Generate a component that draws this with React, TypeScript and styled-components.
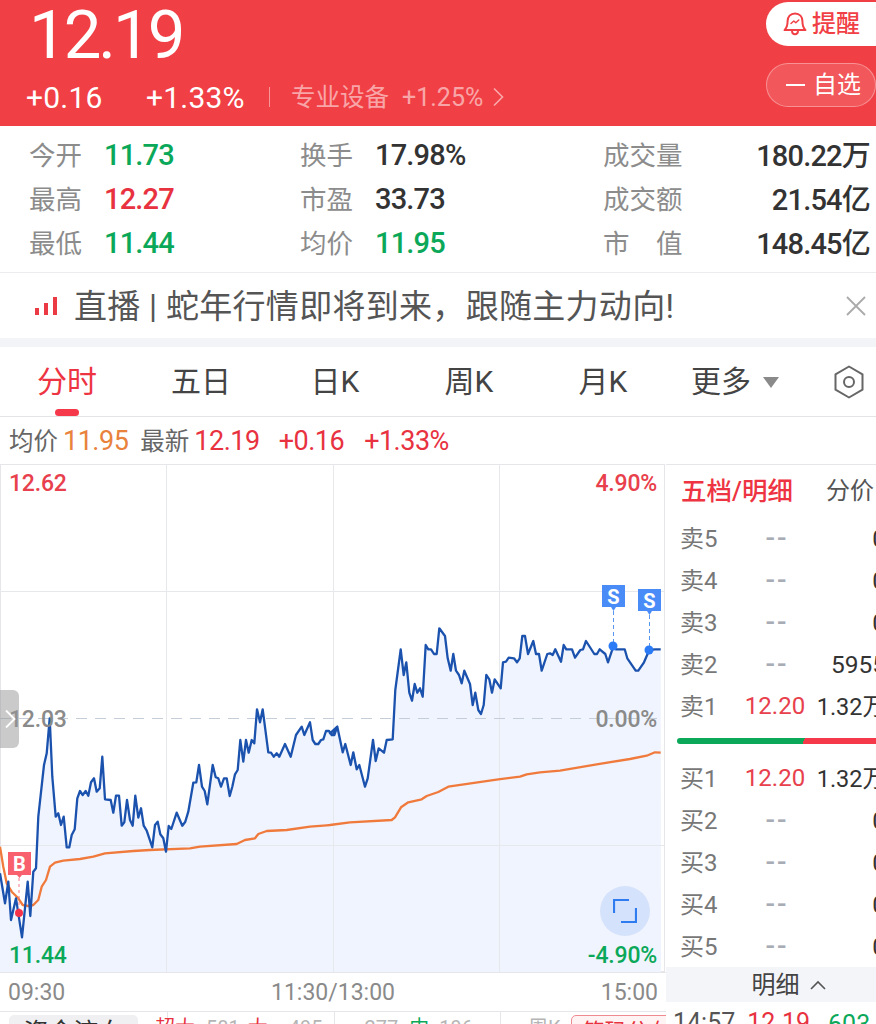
import styled, { createGlobalStyle } from 'styled-components';

const RED = '#f14045';
const GREEN = '#0ba85a';
const FONT = `Roboto, "Noto Sans CJK SC", sans-serif`;

// traced from the reference, [x, y] in page pixels
const leftPrice = [
    [0, 850], [15, 940], [25, 875], [33, 990], [48, 925], [66, 1042], [83, 875], [91, 978], [100, 845], [108, 835], [115, 680],
    [132, 525], [140, 490], [149, 385], [157, 560], [167, 680], [175, 670], [183, 705], [191, 680], [200, 772], [208, 772],
    [215, 735], [224, 718], [232, 625], [240, 603], [248, 615], [257, 603], [265, 617], [273, 577], [282, 565], [290, 605],
    [299, 595], [307, 500], [315, 628], [332, 630], [340, 668], [348, 617], [357, 617], [365, 707], [373, 697], [381, 630],
    [390, 690], [398, 707], [406, 617], [415, 683], [423, 655], [431, 707], [440, 722], [457, 772], [465, 705], [473, 695],
    [481, 733], [490, 745], [498, 785], [506, 708], [514, 717], [530, 668], [547, 707], [556, 695], [565, 665], [580, 578],
    [589, 577], [597, 525], [606, 590], [614, 603], [622, 643], [638, 525], [647, 562], [655, 565], [663, 590], [672, 565],
    [680, 565], [689, 618], [697, 590], [705, 553], [713, 540], [721, 450], [730, 515], [738, 450], [746, 488], [755, 450],
    [763, 460], [771, 358], [780, 397], [788, 358], [805, 487], [813, 488], [821, 500], [830, 490], [838, 500], [855, 462],
    [872, 500], [888, 435], [905, 410], [913, 435], [930, 397], [938, 450], [946, 462], [955, 462], [963, 450], [970, 448],
    [978, 423], [987, 423], [995, 435], [1003, 435], [1012, 410],
].map(([x, y]) => [x / 3, 590 + y / 3]);

const rightPrice = [
    [0, 460], [8, 465], [22, 440], [38, 517], [46, 492], [62, 555], [70, 517], [80, 568], [88, 555], [105, 620], [113, 595],
    [129, 480], [137, 543], [146, 505], [162, 518], [170, 480], [188, 478], [196, 330], [212, 208], [221, 285], [229, 247],
    [238, 338], [246, 362], [254, 312], [262, 338], [270, 325], [278, 350], [287, 195], [295, 208], [303, 208], [312, 222],
    [320, 222], [328, 145], [345, 168], [353, 235], [362, 272], [370, 222], [378, 272], [387, 285], [395, 310], [403, 272],
    [420, 312], [428, 375], [436, 338], [445, 390], [453, 402], [461, 375], [469, 285], [478, 298], [486, 338], [494, 298],
    [512, 325], [519, 247], [528, 245], [536, 233], [552, 235], [561, 247], [569, 235], [577, 168], [585, 168], [594, 222],
    [610, 183], [618, 222], [627, 222], [635, 272], [652, 222], [660, 220], [668, 225], [676, 208], [693, 245], [701, 195],
    [709, 208], [726, 208], [735, 233], [751, 210], [759, 208], [768, 183], [793, 222], [801, 222], [809, 208], [826, 222],
    [834, 247], [850, 200], [858, 208], [884, 208], [892, 235], [917, 272], [925, 272], [942, 247], [958, 210], [975, 208],
    [992, 208],
].map(([x, y]) => [330 + x / 3, 580 + y / 3]);

const leftAvg = [
    [0, 770], [10, 830], [20, 880], [35, 905], [55, 925], [68, 945], [85, 948], [100, 945], [115, 930], [125, 890], [138, 870],
    [150, 830], [165, 818], [190, 812], [240, 807], [280, 800], [315, 790], [400, 783], [450, 780], [570, 775], [600, 770],
    [710, 762], [735, 750], [765, 745], [775, 732], [800, 723], [860, 720], [930, 710], [980, 706],
].map(([x, y]) => [x / 3, 590 + y / 3]);

const rightAvg = [
    [0, 735], [60, 727], [185, 720], [195, 712], [213, 682], [235, 667], [275, 658], [290, 648], [325, 636], [355, 620],
    [505, 598], [570, 590], [590, 583], [630, 577], [690, 572], [800, 553], [900, 537], [950, 527], [975, 517], [992, 518],
].map(([x, y]) => [330 + x / 3, 580 + y / 3]);

const price = [...leftPrice, ...rightPrice];
const avg = [...leftAvg, ...rightAvg];
const toPoints = (line: number[][]) => line.map(([x, y]) => `${x.toFixed(1)},${y.toFixed(1)}`).join(' ');
const areaPoints = `${toPoints(price)} 661,972 0,972`;

const stats = [
    [['今开', '11.73', GREEN], ['换手', '17.98%', '#333'], ['成交量', '180.22万', '#333']],
    [['最高', '12.27', '#e8323f'], ['市盈', '33.73', '#333'], ['成交额', '21.54亿', '#333']],
    [['最低', '11.44', GREEN], ['均价', '11.95', GREEN], ['市　值', '148.45亿', '#333']],
];

const sells = [['卖5', '--', '0'], ['卖4', '--', '0'], ['卖3', '--', '0'], ['卖2', '--', '5955'], ['卖1', '12.20', '1.32万']];
const buys = [['买1', '12.20', '1.32万'], ['买2', '--', '0'], ['买3', '--', '0'], ['买4', '--', '0'], ['买5', '--', '0']];
const tabs = ['分时', '五日', '日K', '周K', '月K'];

const flow = [
    { text: '超大', color: '#e8323f', gap: 17 },
    { text: '581', color: '#b5b5b5', gap: 11 },
    { text: '大', color: '#e8323f', gap: 8 },
    { text: '495', color: '#b5b5b5', gap: 21 },
    { text: '277', color: '#b5b5b5', gap: 42 },
    { text: '中', color: GREEN, gap: 11 },
    { text: '196', color: '#b5b5b5', gap: 10 },
    { text: '周K', color: '#b5b5b5', gap: 55 },
];

const Quote = ({ row }: { row: string[] }) => (
    <QuoteRow>
        <QuoteLabel>{row[0]}</QuoteLabel>
        <QuotePrice $empty={row[1] === '--'}>{row[1]}</QuotePrice>
        <QuoteVolume $compact={row[2].includes('万')}>{row[2]}</QuoteVolume>
    </QuoteRow>
);

export default function App() {
    return (
        <Page>
            <Global />
            <Header>
                <HeaderLeft>
                    <BigPrice>12.19</BigPrice>
                    <ChangeRow>
                        <Change $width={120}>+0.16</Change>
                        <Change $width={123}>+1.33%</Change>
                        <Divider />
                        <SectorName>专业设备</SectorName>
                        <SectorChange>+1.25%</SectorChange>
                        <svg width="12" height="20" viewBox="0 0 12 20" fill="none" stroke="rgba(255,255,255,.55)" strokeWidth="1.6">
                            <path d="M2 1.5 10.5 10 2 18.5" />
                        </svg>
                    </ChangeRow>
                </HeaderLeft>
                <HeaderRight>
                    <RemindButton>
                        <svg width="26" height="26" viewBox="0 0 26 26" fill="none" stroke={RED} strokeWidth="2" strokeLinejoin="round" strokeLinecap="round">
                            <path d="M13 2.5c-4.6 0-7.4 3.3-7.4 7.6 0 4.300-.9 6.900-3.100 9h21c-2.200-2.100-3.100-4.700-3.100-9 0-4.300-2.800-7.600-7.400-7.600Z" />
                            <path d="M10 19.500c0 2.300 1.300 3.800 3 3.800s3-1.500 3-3.800" />
                            <path d="m9 12.500 2.800-2.500 2 1.800 3-2.800" strokeWidth="1.500" />
                        </svg>
                        <ButtonText>提醒</ButtonText>
                    </RemindButton>
                    <WatchButton>
                        <WatchDash />
                        <ButtonText>自选</ButtonText>
                    </WatchButton>
                </HeaderRight>
            </Header>

            <Stats>
                {stats.map((row, i) => (
                    <StatRow key={i}>
                        {row.map(([label, value, color], j) => (
                            <StatItem key={label} $last={j === 2}>
                                <StatLabel>{label}</StatLabel>
                                <StatValue $color={color} $last={j === 2}>{value}</StatValue>
                            </StatItem>
                        ))}
                    </StatRow>
                ))}
            </Stats>

            <Banner>
                <LiveBars>
                    <i />
                    <i />
                    <i />
                </LiveBars>
                <BannerText>直播 | 蛇年行情即将到来，跟随主力动向!</BannerText>
                <svg width="22" height="22" viewBox="0 0 22 22" stroke="#aaa" strokeWidth="1.800">
                    <path d="M2 2 20 20M20 2 2 20" />
                </svg>
            </Banner>

            <Tabs>
                {tabs.map((tab, i) => (
                    <Tab key={tab} $active={i === 0}>{tab}</Tab>
                ))}
                <MoreTab>
                    更多
                    <MoreArrow />
                </MoreTab>
                <SettingIcon>
                    <svg width="30" height="34" viewBox="0 0 30 34" fill="none" stroke="#666" strokeWidth="2">
                        <path d="M15 1.500 28.500 9.300V24.700L15 32.500 1.500 24.700V9.300Z" strokeLinejoin="round" />
                        <circle cx="15" cy="17" r="5" />
                    </svg>
                </SettingIcon>
            </Tabs>

            <InfoRow>
                <InfoLabel>均价</InfoLabel>
                <InfoValue $color="#e8823c">11.95</InfoValue>
                <InfoLabel $gap={12}>最新</InfoLabel>
                <InfoValue $color="#e8323f">12.19</InfoValue>
                <InfoValue $color="#e8323f" $gap={19}>+0.16</InfoValue>
                <InfoValue $color="#e8323f" $gap={20}>+1.33%</InfoValue>
            </InfoRow>

            <Body>
                <ChartColumn>
                    <Chart>
                        <svg width="665" height="508" viewBox="0 464 665 508">
                            <rect x="0.500" y="464.500" width="664" height="507" fill="#fff" stroke="#e6e6ea" />
                            <polygon points={areaPoints} fill="#f0f4fe" />
                            <g stroke="#e7e8ec" strokeWidth="1">
                                <path d="M166.500 464V972M333.500 464V972M499.500 464V972" />
                                <path d="M0 591.500H665M0 845.500H665" />
                            </g>
                            <path d="M0 718.500H665" stroke="#c5ced8" strokeWidth="1" strokeDasharray="11 8" />
                            <polyline points={toPoints(avg)} fill="none" stroke="#f07a3c" strokeWidth="2.300" strokeLinejoin="round" />
                            <polyline points={toPoints(price)} fill="none" stroke="#1b52ae" strokeWidth="2.300" strokeLinejoin="round" />

                            <path d="M19 878V910" stroke="#f5788a" strokeWidth="1" strokeDasharray="3 3" />
                            <circle cx="19" cy="913" r="4" fill="#f5334a" />
                            <path d="M8 852H31V875H22L19.500 878 17 875H8Z" fill="#f9606e" />
                            <MarkerText x="19.500" y="871">B</MarkerText>

                            <path d="M613.500 611V644" stroke="#5a96f0" strokeWidth="1" strokeDasharray="4 3" />
                            <circle cx="613" cy="646" r="4.500" fill="#2a7bf5" />
                            <path d="M602 585H625V607H616L613.500 611 611 607H602Z" fill="#4a8cf7" />
                            <MarkerText x="613.500" y="604">S</MarkerText>

                            <path d="M649.500 615V648" stroke="#5a96f0" strokeWidth="1" strokeDasharray="4 3" />
                            <circle cx="649" cy="650" r="4.500" fill="#2a7bf5" />
                            <path d="M638 589H661V611H652L649.500 615 647 611H638Z" fill="#4a8cf7" />
                            <MarkerText x="649.500" y="608">S</MarkerText>
                        </svg>
                        <AxisLabel $top={6} $left={9} $color="#e8404c">12.62</AxisLabel>
                        <AxisLabel $top={6} $right={9} $color="#e8404c">4.90%</AxisLabel>
                        <AxisLabel $top={242} $left={9} $color="#8a8a8a">12.03</AxisLabel>
                        <AxisLabel $top={242} $right={9} $color="#8a8a8a">0.00%</AxisLabel>
                        <AxisLabel $top={478} $left={9} $color={GREEN}>11.44</AxisLabel>
                        <AxisLabel $top={478} $right={9} $color={GREEN}>-4.90%</AxisLabel>
                        <SideHandle>
                            <svg width="12" height="20" viewBox="0 0 12 20" fill="none" stroke="#fff" strokeWidth="1.800">
                                <path d="M2 1.500 10.500 10 2 18.500" />
                            </svg>
                        </SideHandle>
                        <ExpandButton>
                            <svg width="24" height="24" viewBox="0 0 24 24" fill="none" stroke="#2f7bf0" strokeWidth="2.200">
                                <path d="M1 14V1H16M23 9V23H8" />
                            </svg>
                        </ExpandButton>
                    </Chart>
                    <TimeAxis>
                        <span>09:30</span>
                        <span>11:30/13:00</span>
                        <span>15:00</span>
                    </TimeAxis>
                    <FlowRow>
                        <FlowTab>资金流向</FlowTab>
                        {flow.map((item) => (
                            <FlowText key={item.text} $color={item.color} $gap={item.gap}>{item.text}</FlowText>
                        ))}
                        <ChipTag>筹码分布</ChipTag>
                    </FlowRow>
                </ChartColumn>

                <Panel>
                    <PanelHeader>
                        <PanelTitle>五档/明细</PanelTitle>
                        <PanelSub>分价</PanelSub>
                    </PanelHeader>
                    {sells.map((row) => <Quote key={row[0]} row={row} />)}
                    <RatioWrap>
                        <RatioBar />
                    </RatioWrap>
                    {buys.map((row) => <Quote key={row[0]} row={row} />)}
                    <DetailBar>
                        <DetailText>明细</DetailText>
                        <svg width="16" height="10" viewBox="0 0 16 10" fill="none" stroke="#555" strokeWidth="1.600">
                            <path d="M1 9 8 2l7 7" />
                        </svg>
                    </DetailBar>
                    <TradeRow>
                        <span>14:57</span>
                        <TradePrice>12.19</TradePrice>
                        <TradeVolume>603↑</TradeVolume>
                    </TradeRow>
                </Panel>
            </Body>
        </Page>
    );
}

const Global = createGlobalStyle`
    html, body {
        margin: 0;
        padding: 0;
        background: #fff;
    }
`;

const Page = styled.div`
    width: 876px;
    height: 1024px;
    overflow: hidden;
    background: #fff;
    font-family: ${FONT};
`;

const Header = styled.div`
    height: 126px;
    background: ${RED};
    display: flex;
    justify-content: space-between;
    color: #fff;
`;

const HeaderLeft = styled.div`
    padding-left: 26px;
`;

const BigPrice = styled.div`
    height: 70px;
    padding-left: 3px;
    font-size: 67px;
    line-height: 70px;
    letter-spacing: -3px;
`;

const ChangeRow = styled.div`
    height: 54px;
    display: flex;
    align-items: center;
`;

const Change = styled.span<{ $width: number }>`
    width: ${(p) => p.$width}px;
    font-size: 30px;
    letter-spacing: 0.2px;
`;

const Divider = styled.i`
    width: 1px;
    height: 20px;
    margin-right: 21px;
    background: rgba(255, 255, 255, 0.45);
`;

const SectorName = styled.span`
    width: 111px;
    margin-top: -4px;
    font-size: 24.5px;
    color: rgba(255, 255, 255, 0.55);
`;

const SectorChange = styled.span`
    width: 90px;
    font-size: 25px;
    color: rgba(255, 255, 255, 0.55);
`;

const HeaderRight = styled.div`
    width: 110px;
    padding-top: 2px;
    display: flex;
    flex-direction: column;
    gap: 17px;
`;

const ButtonText = styled.span`
    margin-top: -5px;
`;

const RemindButton = styled.div`
    height: 44px;
    border-radius: 22px 0 0 22px;
    background: #fff;
    color: ${RED};
    font-size: 24px;
    font-weight: 500;
    display: flex;
    align-items: center;
    gap: 4px;
    padding-left: 16px;
    box-sizing: border-box;
`;

const WatchButton = styled.div`
    height: 44px;
    border: 1px solid rgba(255, 255, 255, 0.35);
    border-radius: 22px;
    background: rgba(255, 255, 255, 0.12);
    font-size: 24px;
    display: flex;
    align-items: center;
    gap: 8px;
    padding-left: 19px;
    box-sizing: border-box;
`;

const WatchDash = styled.i`
    width: 19px;
    height: 2px;
    background: #fff;
`;

const Stats = styled.div`
    height: 147px;
    padding: 7px 6px 0 29px;
    box-sizing: border-box;
    border-bottom: 1px solid #ececef;
`;

const StatRow = styled.div`
    height: 44px;
    display: grid;
    grid-template-columns: 271px 303px 1fr;
    align-items: center;
`;

const StatItem = styled.div<{ $last?: boolean }>`
    display: flex;
    align-items: center;
    justify-content: ${(p) => (p.$last ? 'space-between' : 'flex-start')};
    gap: 22px;
`;

const StatLabel = styled.span`
    margin-top: -4px;
    font-size: 26.5px;
    color: #8c8c8c;
`;

const StatValue = styled.span<{ $color: string; $last: boolean }>`
    margin-top: ${(p) => (p.$last ? '-4px' : '0')};
    font-size: 29px;
    font-weight: 500;
    letter-spacing: -0.8px;
    color: ${(p) => p.$color};
`;

const Banner = styled.div`
    height: 65px;
    padding: 0 9px 0 35px;
    display: flex;
    align-items: center;
    box-sizing: border-box;
`;

const LiveBars = styled.div`
    width: 39px;
    height: 18px;
    display: flex;
    align-items: flex-end;
    gap: 5px;

    i {
        width: 4px;
        background: #ec3a45;
    }
    i:nth-child(1) {
        height: 7px;
    }
    i:nth-child(2) {
        height: 12px;
    }
    i:nth-child(3) {
        height: 18px;
    }
`;

const BannerText = styled.span`
    flex: 1;
    margin-top: -4px;
    font-size: 33px;
    letter-spacing: 0.3px;
    color: #555;
    white-space: nowrap;
`;

const Tabs = styled.div`
    height: 79px;
    border-top: 9px solid #f3f4f8;
    border-bottom: 1px solid #e4e4e6;
    box-sizing: border-box;
    display: grid;
    grid-template-columns: repeat(5, 134px) 1fr auto;
    align-items: center;
`;

const Tab = styled.div<{ $active?: boolean }>`
    height: 100%;
    padding-bottom: 5px;
    box-sizing: border-box;
    display: flex;
    align-items: center;
    justify-content: center;
    position: relative;
    font-size: 30px;
    color: ${(p) => (p.$active ? '#ee3342' : '#444')};

    &::after {
        content: '';
        display: ${(p) => (p.$active ? 'block' : 'none')};
        position: absolute;
        bottom: 0;
        left: 55px;
        width: 24px;
        height: 7px;
        border-radius: 4px;
        background: #f5394b;
    }
`;

const MoreTab = styled.div`
    height: 100%;
    padding: 0 0 5px 21px;
    box-sizing: border-box;
    font-size: 30px;
    color: #444;
    display: flex;
    align-items: center;
    gap: 12px;
`;

const MoreArrow = styled.i`
    width: 0;
    height: 0;
    margin-top: 7px;
    border-left: 8px solid transparent;
    border-right: 8px solid transparent;
    border-top: 11px solid #8a8a8a;
`;

const SettingIcon = styled.div`
    padding-right: 12px;
    display: flex;
`;

const InfoRow = styled.div`
    height: 47px;
    padding-left: 9px;
    display: flex;
    align-items: center;
    box-sizing: border-box;
`;

const InfoLabel = styled.span<{ $gap?: number }>`
    margin-left: ${(p) => p.$gap ?? 0}px;
    margin-right: 5px;
    margin-top: -3px;
    font-size: 24.5px;
    color: #666;
`;

const InfoValue = styled.span<{ $color: string; $gap?: number }>`
    margin-left: ${(p) => p.$gap ?? 0}px;
    font-size: 27px;
    letter-spacing: -0.5px;
    color: ${(p) => p.$color};
`;

const Body = styled.div`
    display: flex;
`;

const ChartColumn = styled.div`
    width: 666px;
    flex: none;
`;

const Chart = styled.div`
    position: relative;
    height: 508px;

    svg {
        display: block;
    }
`;

const MarkerText = styled.text`
    font-family: Roboto, sans-serif;
    font-size: 20px;
    font-weight: 700;
    fill: #fff;
    text-anchor: middle;
`;

const AxisLabel = styled.span<{ $top: number; $left?: number; $right?: number; $color: string }>`
    position: absolute;
    top: ${(p) => p.$top + 1}px;
    left: ${(p) => (p.$left === undefined ? 'auto' : `${p.$left}px`)};
    right: ${(p) => (p.$right === undefined ? 'auto' : `${p.$right}px`)};
    font-size: 23px;
    font-weight: 500;
    letter-spacing: -0.2px;
    line-height: 26px;
    color: ${(p) => p.$color};
`;

const SideHandle = styled.div`
    position: absolute;
    left: 0;
    top: 226px;
    width: 19px;
    height: 58px;
    border-radius: 0 6px 6px 0;
    background: rgba(150, 150, 150, 0.5);
    display: flex;
    align-items: center;
    justify-content: center;
`;

const ExpandButton = styled.div`
    position: absolute;
    left: 600px;
    top: 422px;
    width: 50px;
    height: 50px;
    border-radius: 50%;
    background: #d5e2fb;
    display: flex;
    align-items: center;
    justify-content: center;
`;

const TimeAxis = styled.div`
    height: 40px;
    padding: 0 8px;
    border-top: 1px solid #e6e6ea;
    border-bottom: 1px solid #e6e6ea;
    box-sizing: border-box;
    display: flex;
    align-items: center;
    justify-content: space-between;
    font-size: 23px;
    color: #8a8a8a;
`;

// the chart's vertical grid lines run on through this row
const FlowRow = styled.div`
    height: 12px;
    padding: 3px 0 0 9px;
    box-sizing: border-box;
    display: flex;
    align-items: flex-start;
    overflow: hidden;
    background:
        linear-gradient(#e6e6ea, #e6e6ea) 167px 0 / 1px 100% no-repeat,
        linear-gradient(#e6e6ea, #e6e6ea) 334px 0 / 1px 100% no-repeat,
        linear-gradient(#e6e6ea, #e6e6ea) 500px 0 / 1px 100% no-repeat;
`;

const FlowTab = styled.div`
    width: 129px;
    height: 40px;
    flex: none;
    border-radius: 5px;
    background: #f0f0f2;
    font-size: 25px;
    line-height: 36px;
    text-align: center;
    color: #333;
`;

const FlowText = styled.span<{ $color: string; $gap: number }>`
    margin-left: ${(p) => p.$gap}px;
    flex: none;
    font-size: 20px;
    line-height: 26px;
    color: ${(p) => p.$color};
`;

const ChipTag = styled.span`
    width: 112px;
    height: 40px;
    margin-left: 10px;
    flex: none;
    border: 1px solid #f08a90;
    border-radius: 5px;
    background: #fff3f3;
    box-sizing: border-box;
    font-size: 22px;
    line-height: 32px;
    text-align: center;
    color: #e8323f;
`;

const Panel = styled.div`
    width: 210px;
    flex: none;
    height: 560px;
    overflow: hidden;
    border-top: 1px solid #e6e6ea;
    box-sizing: border-box;
`;

const PanelHeader = styled.div`
    height: 52px;
    width: 240px;
    padding: 0 0 6px 15px;
    box-sizing: border-box;
    display: flex;
    align-items: center;
    gap: 33px;
`;

const PanelTitle = styled.span`
    font-size: 25.5px;
    font-weight: 500;
    color: #ee3342;
    white-space: nowrap;
`;

const PanelSub = styled.span`
    font-size: 24px;
    color: #555;
    white-space: nowrap;
`;

const QuoteRow = styled.div`
    width: 220px;
    height: 42px;
    padding-left: 14px;
    box-sizing: border-box;
    display: grid;
    grid-template-columns: 58px 74px 1fr;
    align-items: center;
`;

const QuoteLabel = styled.span`
    margin-top: -4px;
    font-size: 24px;
    color: #777;
`;

const QuotePrice = styled.span<{ $empty: boolean }>`
    padding-left: ${(p) => (p.$empty ? '4px' : '0')};
    font-size: ${(p) => (p.$empty ? '28px' : '24px')};
    font-weight: ${(p) => (p.$empty ? 500 : 400)};
    line-height: 30px;
    letter-spacing: ${(p) => (p.$empty ? '2px' : '0')};
    text-align: center;
    color: ${(p) => (p.$empty ? '#a8adb5' : '#e8404c')};
`;

const QuoteVolume = styled.span<{ $compact: boolean }>`
    margin-top: ${(p) => (p.$compact ? '-3px' : '0')};
    font-size: ${(p) => (p.$compact ? '23.5px' : '24.5px')};
    text-align: right;
    color: #333;
    white-space: nowrap;
`;

const RatioWrap = styled.div`
    height: 30px;
    padding: 11px 0 0 11px;
    box-sizing: border-box;
`;

const RatioBar = styled.div`
    width: 100%;
    height: 6px;
    border-radius: 3px 0 0 3px;
    background: linear-gradient(112deg, #0ba85a 63.500%, #f5394b 63.500%);
`;

const DetailBar = styled.div`
    height: 35px;
    padding-left: 35px;
    box-sizing: border-box;
    background: #f4f5f9;
    display: flex;
    align-items: center;
    justify-content: center;
    gap: 10px;
    color: #444;
`;

const DetailText = styled.span`
    margin-top: -4px;
    font-size: 24px;
`;

const TradeRow = styled.div`
    width: 230px;
    padding: 0 0 0 7px;
    height: 40px;
    display: flex;
    align-items: center;
    font-size: 25px;
    color: #555;
    box-sizing: border-box;
`;

const TradePrice = styled.span`
    margin-left: 12px;
    color: #e8323f;
`;

const TradeVolume = styled.span`
    margin-left: 18px;
    color: ${GREEN};
`;
